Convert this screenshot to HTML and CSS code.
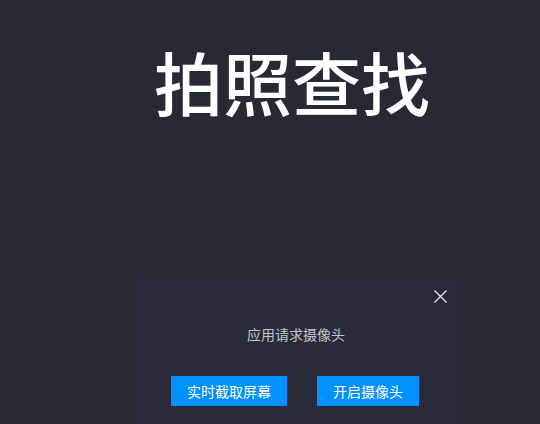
FILE: index.html
```html
<!DOCTYPE html>
<html lang="zh">
<head>
<meta charset="utf-8">
<link rel="stylesheet" href="styles.css">
</head>
<body>
<div class="page">
  <h1 class="title">拍照查找</h1>
  <div class="dialog">
    <button class="close" aria-label="关闭">
      <svg width="13" height="13" viewBox="0 0 13 13"><path d="M0.5 0.5 L12.5 12.5 M12.5 0.5 L0.5 12.5" stroke="#e6e8ee" stroke-width="1.3" fill="none"/></svg>
    </button>
    <p class="message">应用请求摄像头</p>
    <div class="actions">
      <button class="btn">实时截取屏幕</button>
      <button class="btn">开启摄像头</button>
    </div>
  </div>
</div>
</body>
</html>
```
FILE: styles.css
```css
html, body {
  margin: 0;
  padding: 0;
  background: #252a33;
  overflow: hidden;
}
.page {
  width: 540px;
  height: 424px;
  display: flex;
  flex-direction: column;
  font-family: "Noto Sans CJK SC", "Noto Sans", sans-serif;
}
.title {
  margin: 0;
  padding: 31px 0 0 44px;
  height: 248px;
  box-sizing: border-box;
  text-align: center;
  font-size: 69px;
  font-weight: 500;
  line-height: 100px;
  color: #ffffff;
}
.dialog {
  position: relative;
  margin-left: 134px;
  width: 328px;
  flex: 1;
  background: #292a3a;
  margin-top: 32px;
}
.close {
  position: absolute;
  top: 10px;
  right: 15px;
  width: 13px;
  height: 13px;
  padding: 0;
  border: 0;
  background: none;
  display: flex;
}
.message {
  margin: 0;
  padding-top: 44px;
  text-align: center;
  font-size: 14px;
  line-height: 20px;
  color: #c3c7cf;
  transform: translateX(-2px);
}
.actions {
  display: flex;
  gap: 30px;
  padding-left: 37px;
  margin-top: 32px;
}
.btn {
  height: 30px;
  padding: 0 16px;
  border: 0;
  background: #0091ff;
  color: #ffffff;
  font-family: "Noto Sans CJK SC", sans-serif;
  font-size: 14px;
  line-height: 30px;
}
```
